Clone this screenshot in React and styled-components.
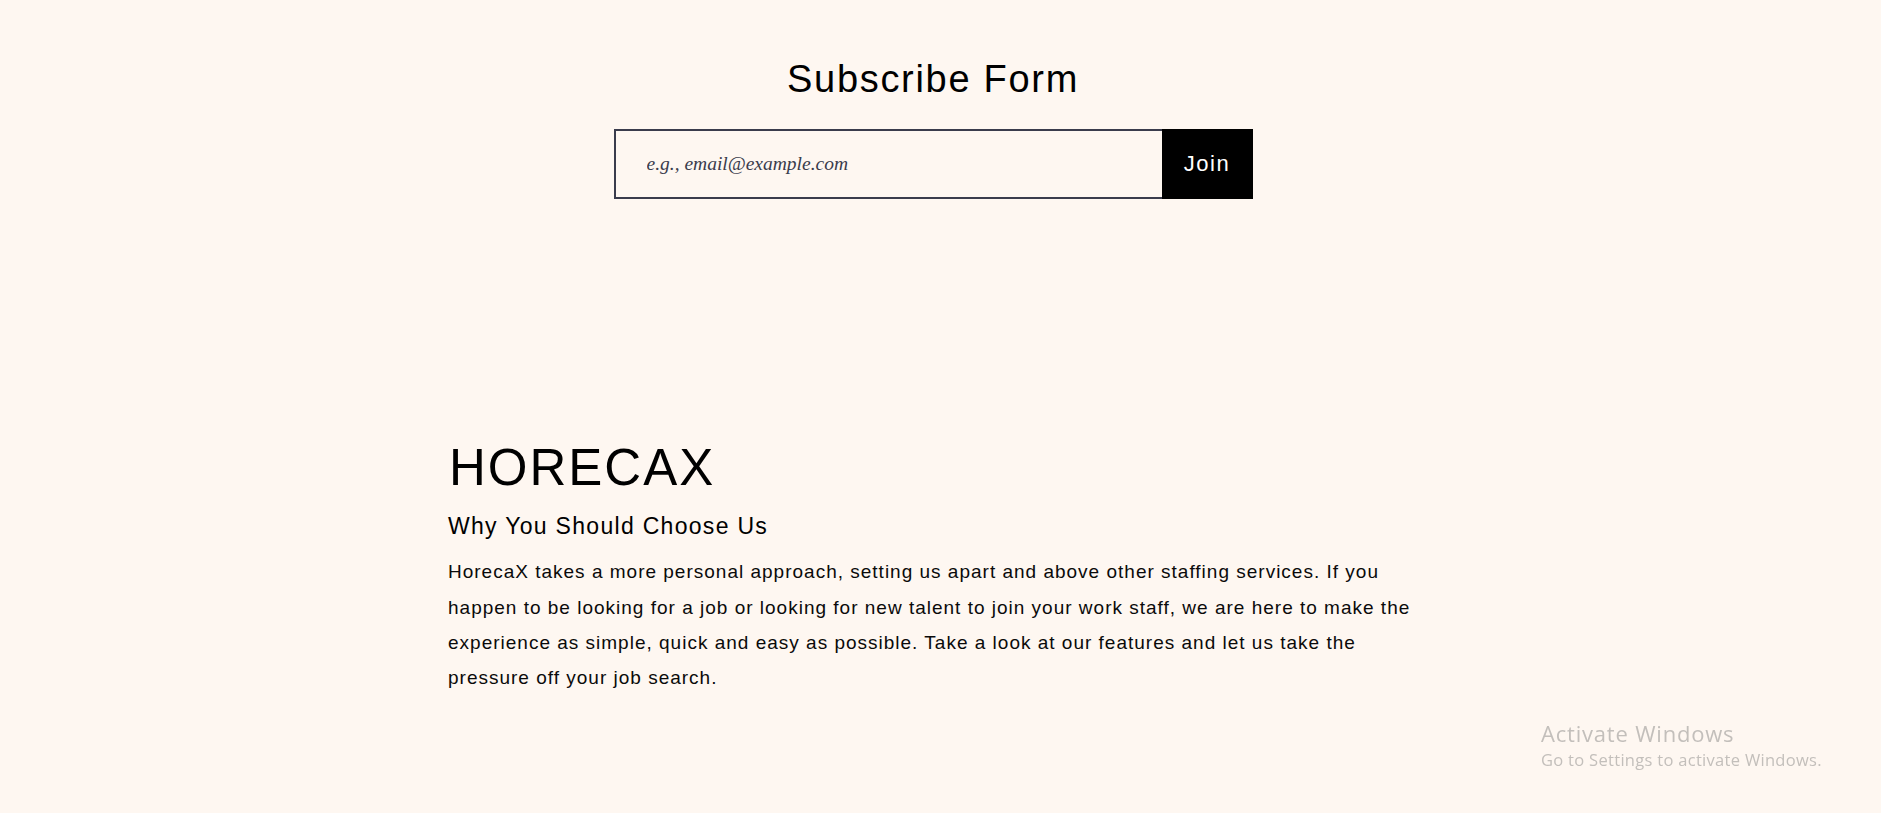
import styled, { createGlobalStyle } from "styled-components";

const GlobalStyle = createGlobalStyle`
    html, body {
        margin: 0;
        padding: 0;
        background-color: #fef7f1;
    }
    body {
        font-family: "Liberation Sans", Arial, sans-serif;
        color: #000;
    }
`

const App = () => {
    return (
        <>
            <GlobalStyle />
            <Page>
                <Subscribe>
                    <Titre>Subscribe Form</Titre>
                    <Formulaire onSubmit={(e) => e.preventDefault()}>
                        <Courriel type="email" placeholder="e.g., email@example.com" />
                        <Bouton type="submit">Join</Bouton>
                    </Formulaire>
                </Subscribe>
                <Apropos>
                    <Marque>HORECAX</Marque>
                    <SousTitre>Why You Should Choose Us</SousTitre>
                    <Texte>
                        HorecaX takes a more personal approach, setting us apart and above other staffing services. If you
                        happen to be looking for a job or looking for new talent to join your work staff, we are here to make the
                        experience as simple, quick and easy as possible. Take a look at our features and let us take the
                        pressure off your job search.
                    </Texte>
                </Apropos>
            </Page>
            <Filigrane>
                <p>Activate Windows</p>
                <small>Go to Settings to activate Windows.</small>
            </Filigrane>
        </>
    )
}

const Page = styled.main`
    min-height: 813px;
    box-sizing: border-box;
    padding: 57px 15px 0 0;
    display: flex;
    flex-direction: column;
    align-items: center;
`

const Subscribe = styled.section`
    display: flex;
    flex-direction: column;
    align-items: center;
    gap: 26px;
`

const Titre = styled.h2`
    margin: 0;
    font-size: 38px;
    font-weight: 400;
    line-height: 1.2;
    letter-spacing: 1.7px;
`

const Formulaire = styled.form`
    display: flex;
    width: 639px;
    height: 70px;
`

const Courriel = styled.input`
    flex: 1;
    min-width: 0;
    box-sizing: border-box;
    border: 2px solid #3a3c4c;
    border-right: none;
    background: transparent;
    padding: 0 0 0 31px;
    font-family: "Liberation Serif", "Times New Roman", serif;
    font-style: italic;
    font-size: 19.5px;
    color: #3a3c4c;
    outline: none;

    &::placeholder {
        color: #3a3c4c;
        opacity: 1;
    }
`

const Bouton = styled.button`
    width: 91px;
    border: none;
    background-color: #000;
    color: #fff;
    font-family: "Liberation Sans", Arial, sans-serif;
    font-size: 22px;
    letter-spacing: 1.5px;
    padding: 0;
    cursor: pointer;
`

const Apropos = styled.section`
    width: 972px;
    margin-top: 238px;
    display: flex;
    flex-direction: column;
`

const Marque = styled.h1`
    margin: 0 0 0 2px;
    font-size: 51px;
    font-weight: 400;
    line-height: 1.2;
    letter-spacing: 2px;
`

const SousTitre = styled.h3`
    margin: 15px 0 0 1px;
    font-size: 23px;
    font-weight: 400;
    line-height: 1.2;
    letter-spacing: 1.3px;
`

const Texte = styled.p`
    margin: 14px 0 0 1px;
    font-size: 19px;
    line-height: 35.2px;
    letter-spacing: 1px;
    color: #0a0a0a;
`

const Filigrane = styled.div`
    position: fixed;
    left: 1541px;
    top: 718px;
    font-family: "Open Sans", "Noto Sans", sans-serif;
    color: #c3bfbb;
    pointer-events: none;

    p {
        margin: 0;
        font-size: 22px;
        line-height: 30px;
        letter-spacing: 0.8px;
    }
    small {
        display: block;
        font-size: 16.5px;
        line-height: 24px;
        letter-spacing: 0.3px;
    }
`

export default App;
